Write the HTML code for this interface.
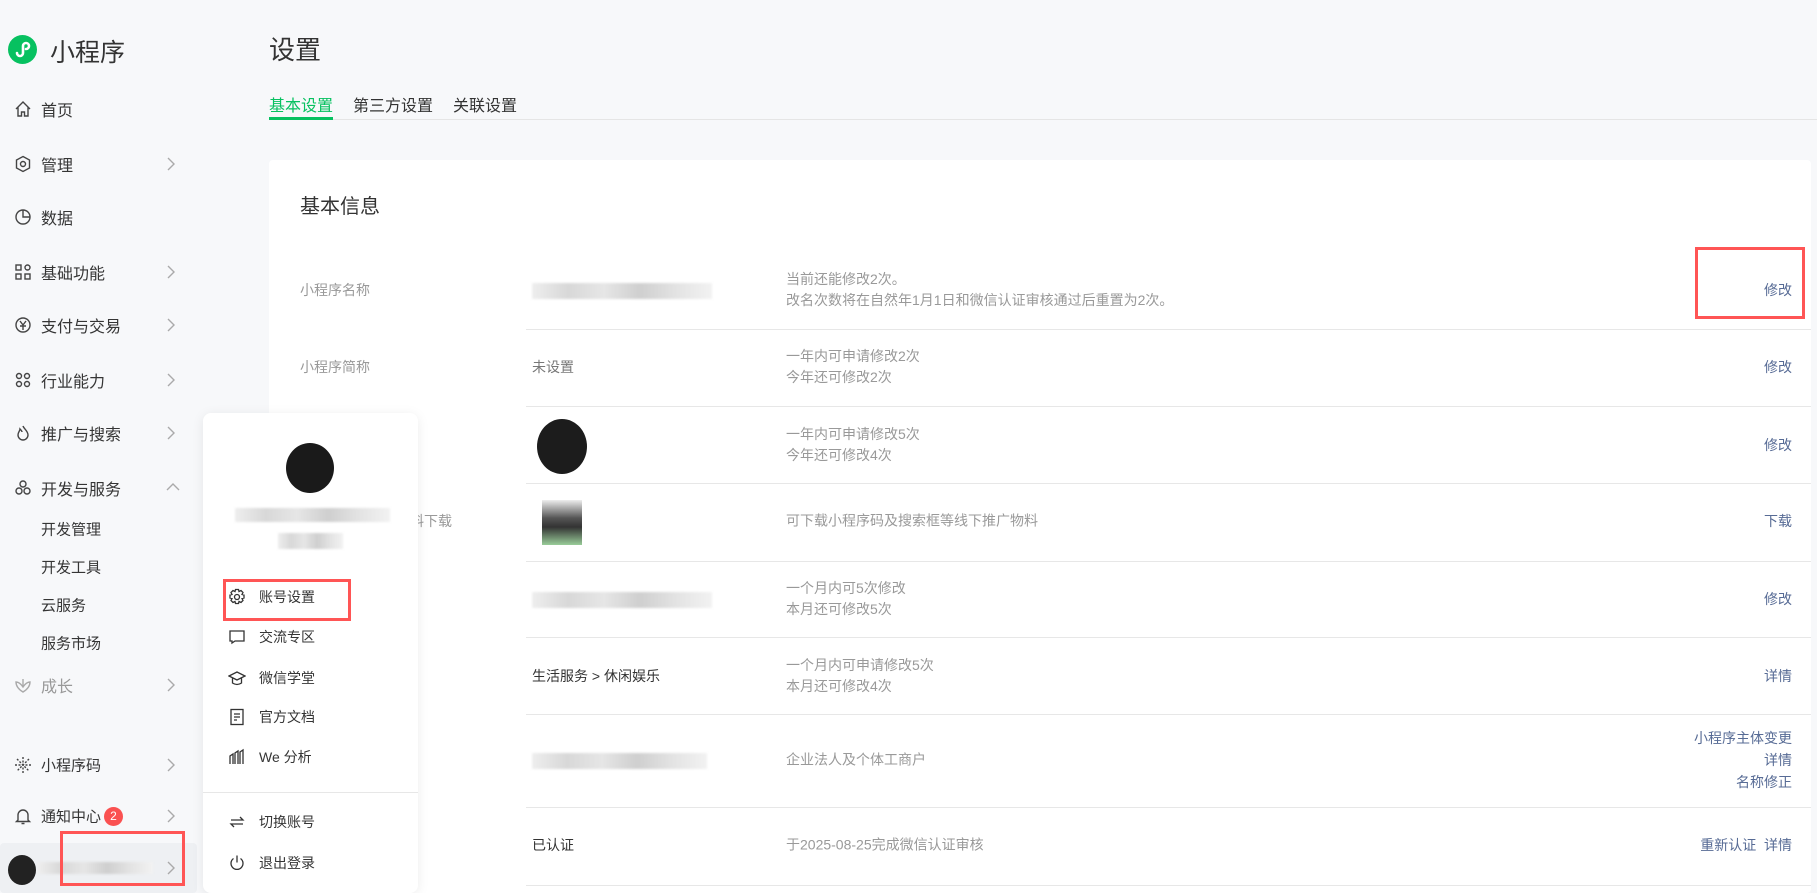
<!DOCTYPE html>
<html><head><meta charset="utf-8"><style>
*{margin:0;padding:0;box-sizing:border-box}
body{width:1817px;height:893px;overflow:hidden;background:#f7f8fa;font-family:"Liberation Sans","Noto Sans CJK SC",sans-serif;color:#333;position:relative}
.a{position:absolute;white-space:nowrap}
.nav{left:41px;font-size:16px;color:#353535;transform:translateY(-50%)}
.ico{left:14px;transform:translateY(-50%)}
.chev{left:166px;transform:translateY(-50%)}
.sub{left:41px;font-size:15px;color:#353535;transform:translateY(-50%)}
.lbl{left:300px;font-size:14px;color:#999;transform:translateY(-50%)}
.val{left:532px;font-size:14px;color:#333;transform:translateY(-50%)}
.desc{left:786px;font-size:14px;color:#999;line-height:21px;transform:translateY(-50%)}
.act{right:25px;font-size:14px;color:#576b95;text-align:right;line-height:22px;transform:translateY(-50%)}
.sep{left:526px;width:1285px;height:1px;background:#e7e7e7}
.blur{background:linear-gradient(90deg,#eee,#d8d8d8 20%,#e6e6e6 40%,#cfcfcf 60%,#e3e3e3 80%,#f2f2f2);filter:blur(1px)}
.mi{left:259px;font-size:14px;color:#353535;transform:translateY(-50%)}
.mic{left:228px;transform:translateY(-50%)}
</style></head><body>
<div class="a" style="left:8px;top:35px;width:29px;height:29px;border-radius:50%;background:#07c160"></div>
<svg class="a" style="left:8px;top:35px" width="29" height="29" viewBox="0 0 29 29"><path d="M9 18a3 3 0 1 0 6 0v-7a3 3 0 1 1 6 0 3 3 0 0 1-3 3M11 15" stroke="#fff" stroke-width="2.6" fill="none" stroke-linecap="round"/></svg>
<div class="a" style="left:50px;top:33px;font-size:25px;color:#333">小程序</div>
<div class="a" style="left:269px;top:30px;font-size:26px;color:#333">设置</div>
<div class="a" style="left:269px;top:92px;font-size:16px;color:#07c160">基本设置</div>
<div class="a" style="left:353px;top:92px;font-size:16px;color:#333">第三方设置</div>
<div class="a" style="left:453px;top:92px;font-size:16px;color:#333">关联设置</div>
<div class="a" style="left:269px;top:119px;width:1548px;height:1px;background:#e5e5e5"></div>
<div class="a" style="left:269px;top:117px;width:64px;height:3px;background:#07c160"></div>
<svg class="a ico" style="top:109px" width="18" height="18" viewBox="0 0 18 18" fill="none" stroke="#444" stroke-width="1.4"><path d="M2 9 9 2l7 7M4 7.5V16h3.5v-4h3v4H14V7.5"/></svg><div class="a nav" style="top:109px">首页</div>
<svg class="a ico" style="top:164px" width="18" height="18" viewBox="0 0 18 18" fill="none" stroke="#444" stroke-width="1.4"><path d="M9 1.5 15.5 5v8L9 16.5 2.5 13V5z"/><circle cx="9" cy="9" r="2.5"/></svg><div class="a nav" style="top:164px">管理</div>
<svg class="a ico" style="top:217px" width="18" height="18" viewBox="0 0 18 18" fill="none" stroke="#444" stroke-width="1.4"><circle cx="9" cy="9" r="7"/><path d="M9 2v7h7"/></svg><div class="a nav" style="top:217px">数据</div>
<svg class="a ico" style="top:272px" width="18" height="18" viewBox="0 0 18 18" fill="none" stroke="#444" stroke-width="1.4"><rect x="2" y="2" width="5" height="5"/><rect x="2" y="11" width="5" height="5"/><rect x="11" y="11" width="5" height="5"/><circle cx="13.5" cy="4.5" r="2.5"/></svg><div class="a nav" style="top:272px">基础功能</div>
<svg class="a ico" style="top:325px" width="18" height="18" viewBox="0 0 18 18" fill="none" stroke="#444" stroke-width="1.4"><circle cx="9" cy="9" r="7"/><path d="M6 5l3 4 3-4M6 10h6M9 9v5"/></svg><div class="a nav" style="top:325px">支付与交易</div>
<svg class="a ico" style="top:380px" width="18" height="18" viewBox="0 0 18 18" fill="none" stroke="#444" stroke-width="1.4"><circle cx="5" cy="5" r="2.5"/><circle cx="13" cy="5" r="2.5"/><circle cx="5" cy="13" r="2.5"/><circle cx="13" cy="13" r="2.5"/></svg><div class="a nav" style="top:380px">行业能力</div>
<svg class="a ico" style="top:433px" width="18" height="18" viewBox="0 0 18 18" fill="none" stroke="#444" stroke-width="1.4"><path d="M9 2c1 3 5 5 5 9a5 5 0 0 1-10 0c0-3 2-4 2-6 1 1 2 2 2 3"/></svg><div class="a nav" style="top:433px">推广与搜索</div>
<svg class="a ico" style="top:488px" width="18" height="18" viewBox="0 0 18 18" fill="none" stroke="#444" stroke-width="1.4"><circle cx="9" cy="5" r="3"/><circle cx="5" cy="12" r="3"/><circle cx="13" cy="12" r="3"/></svg><div class="a nav" style="top:488px">开发与服务</div>
<div class="a sub" style="top:529px">开发管理</div>
<div class="a sub" style="top:567px">开发工具</div>
<div class="a sub" style="top:605px">云服务</div>
<div class="a sub" style="top:643px">服务市场</div>
<svg class="a ico" style="top:685px" width="18" height="18" viewBox="0 0 18 18" fill="none" stroke="#aaa" stroke-width="1.4"><path d="M9 16C4 13 2 10 2 6c3 0 5 2 7 5 2-3 4-5 7-5 0 4-2 7-7 10zM9 11V3"/></svg><div class="a nav" style="top:685px;color:#999">成长</div>
<svg class="a ico" style="top:765px" width="18" height="18" viewBox="0 0 18 18" fill="none" stroke="#444" stroke-width="1.4" stroke-dasharray="2 1.5"><path d="M9 1v16M1 9h16M3 3l12 12M15 3 3 15"/></svg><div class="a nav" style="top:765px;font-size:15px">小程序码</div>
<svg class="a ico" style="top:816px" width="18" height="18" viewBox="0 0 18 18" fill="none" stroke="#444" stroke-width="1.4"><path d="M4 13V8a5 5 0 0 1 10 0v5l1.5 1.5h-13zM7.5 16.5h3"/></svg><div class="a nav" style="top:816px;font-size:15px">通知中心</div>
<div class="a" style="left:104px;top:807px;width:19px;height:19px;border-radius:50%;background:#fa5151;color:#fff;font-size:12px;text-align:center;line-height:19px">2</div>
<svg class="a chev" style="top:164px" width="10" height="16"><path d="M2 2l6 6-6 6" stroke="#aaa" stroke-width="1.4" fill="none"/></svg>
<svg class="a chev" style="top:272px" width="10" height="16"><path d="M2 2l6 6-6 6" stroke="#aaa" stroke-width="1.4" fill="none"/></svg>
<svg class="a chev" style="top:325px" width="10" height="16"><path d="M2 2l6 6-6 6" stroke="#aaa" stroke-width="1.4" fill="none"/></svg>
<svg class="a chev" style="top:380px" width="10" height="16"><path d="M2 2l6 6-6 6" stroke="#aaa" stroke-width="1.4" fill="none"/></svg>
<svg class="a chev" style="top:433px" width="10" height="16"><path d="M2 2l6 6-6 6" stroke="#aaa" stroke-width="1.4" fill="none"/></svg>
<svg class="a" style="left:165px;top:482px" width="16" height="10"><path d="M2 8l6-6 6 6" stroke="#aaa" stroke-width="1.4" fill="none"/></svg>
<svg class="a chev" style="top:685px" width="10" height="16"><path d="M2 2l6 6-6 6" stroke="#aaa" stroke-width="1.4" fill="none"/></svg>
<svg class="a chev" style="top:765px" width="10" height="16"><path d="M2 2l6 6-6 6" stroke="#aaa" stroke-width="1.4" fill="none"/></svg>
<svg class="a chev" style="top:816px" width="10" height="16"><path d="M2 2l6 6-6 6" stroke="#aaa" stroke-width="1.4" fill="none"/></svg>
<div class="a" style="left:0;top:843px;width:197px;height:50px;background:#eef0f3;border-radius:4px"></div>
<div class="a" style="left:8px;top:855px;width:28px;height:30px;border-radius:50%;background:#222"></div>
<div class="a blur" style="left:38px;top:862px;width:115px;height:12px"></div>
<svg class="a chev" style="top:868px" width="10" height="16"><path d="M2 2l6 6-6 6" stroke="#aaa" stroke-width="1.4" fill="none"/></svg>
<div class="a" style="left:60px;top:831px;width:125px;height:55px;border:3px solid #f55"></div>
<div class="a" style="left:269px;top:160px;width:1542px;height:733px;background:#fff;border-radius:4px"></div>
<div class="a" style="left:300px;top:190px;font-size:20px;color:#333">基本信息</div>
<div class="a sep" style="top:329px"></div><div class="a sep" style="top:406px"></div><div class="a sep" style="top:483px"></div><div class="a sep" style="top:561px"></div><div class="a sep" style="top:637px"></div><div class="a sep" style="top:714px"></div><div class="a sep" style="top:807px"></div><div class="a sep" style="top:885px"></div>
<div class="a lbl" style="top:290px">小程序名称</div>
<div class="a blur" style="left:532px;top:283px;width:180px;height:16px"></div>
<div class="a desc" style="top:290px">当前还能修改2次。<br>改名次数将在自然年1月1日和微信认证审核通过后重置为2次。</div>
<div class="a act" style="top:290px">修改</div>
<div class="a" style="left:1695px;top:247px;width:110px;height:72px;border:3px solid #f55"></div>
<div class="a lbl" style="top:367px">小程序简称</div>
<div class="a val" style="top:367px;color:#777;font-size:14px">未设置</div>
<div class="a desc" style="top:367px">一年内可申请修改2次<br>今年还可修改2次</div>
<div class="a act" style="top:367px">修改</div>
<div class="a" style="left:537px;top:419px;width:50px;height:55px;border-radius:50%;background:#1c1c1c"></div>
<div class="a desc" style="top:445px">一年内可申请修改5次<br>今年还可修改4次</div>
<div class="a act" style="top:445px">修改</div>
<div class="a lbl" style="top:521px;left:410px">料下载</div>
<div class="a" style="left:542px;top:500px;width:40px;height:45px;background:linear-gradient(#eee,#555 40%,#333 60%,#9c9)"></div>
<div class="a desc" style="top:521px">可下载小程序码及搜索框等线下推广物料</div>
<div class="a act" style="top:521px">下载</div>
<div class="a blur" style="left:532px;top:592px;width:180px;height:16px"></div>
<div class="a desc" style="top:599px">一个月内可5次修改<br>本月还可修改5次</div>
<div class="a act" style="top:599px">修改</div>
<div class="a val" style="top:676px">生活服务 &gt; 休闲娱乐</div>
<div class="a desc" style="top:676px">一个月内可申请修改5次<br>本月还可修改4次</div>
<div class="a act" style="top:676px">详情</div>
<div class="a blur" style="left:532px;top:753px;width:175px;height:16px"></div>
<div class="a desc" style="top:760px">企业法人及个体工商户</div>
<div class="a act" style="top:760px">小程序主体变更<br>详情<br>名称修正</div>
<div class="a val" style="top:845px">已认证</div>
<div class="a desc" style="top:845px">于2025-08-25完成微信认证审核</div>
<div class="a act" style="top:845px">重新认证&nbsp;&nbsp;详情</div>
<div class="a" style="left:203px;top:413px;width:215px;height:480px;background:#fff;border-radius:8px;box-shadow:0 2px 12px rgba(0,0,0,.08)"></div>
<div class="a" style="left:286px;top:443px;width:48px;height:50px;border-radius:50%;background:#1a1a1a"></div>
<div class="a blur" style="left:235px;top:508px;width:155px;height:14px"></div>
<div class="a blur" style="left:278px;top:533px;width:65px;height:16px"></div>
<svg class="a mic" style="top:597px" width="18" height="18" viewBox="0 0 18 18" fill="none" stroke="#333" stroke-width="1.3"><circle cx="9" cy="9" r="2.5"/><path d="M7.5 1.5h3l.5 2 2-1 2 2-1 2 2 .5v3l-2 .5 1 2-2 2-2-1-.5 2h-3l-.5-2-2 1-2-2 1-2-2-.5v-3l2-.5-1-2 2-2 2 1z"/></svg><div class="a mi" style="top:597px">账号设置</div>
<div class="a" style="left:223px;top:579px;width:128px;height:42px;border:3px solid #f55"></div>
<svg class="a mic" style="top:637px" width="18" height="18" viewBox="0 0 18 18" fill="none" stroke="#333" stroke-width="1.3"><path d="M2 3h14v10H7l-3 2v-2H2z"/></svg><div class="a mi" style="top:637px">交流专区</div>
<svg class="a mic" style="top:678px" width="18" height="18" viewBox="0 0 18 18" fill="none" stroke="#333" stroke-width="1.3"><path d="M1 7l8-4 8 4-8 4zM4.5 9v5c3 2 6 2 9 0V9"/></svg><div class="a mi" style="top:678px">微信学堂</div>
<svg class="a mic" style="top:717px" width="18" height="18" viewBox="0 0 18 18" fill="none" stroke="#333" stroke-width="1.3"><rect x="3" y="1.5" width="12" height="15"/><path d="M6 6h6M6 9h6M6 12h3"/></svg><div class="a mi" style="top:717px">官方文档</div>
<svg class="a mic" style="top:757px" width="18" height="18" viewBox="0 0 18 18" fill="none" stroke="#333" stroke-width="1.3"><path d="M2 16V8l3-2v10M7 16V5l3-2v13M12 16V4l3-2v14"/></svg><div class="a mi" style="top:757px">We 分析</div>
<div class="a" style="left:203px;top:792px;width:215px;height:1px;background:#e7e7e7"></div>
<svg class="a mic" style="top:822px" width="18" height="18" viewBox="0 0 18 18" fill="none" stroke="#333" stroke-width="1.3"><path d="M3 7h12L12 4M15 11H3l3 3"/></svg><div class="a mi" style="top:822px">切换账号</div>
<svg class="a mic" style="top:863px" width="18" height="18" viewBox="0 0 18 18" fill="none" stroke="#333" stroke-width="1.3"><path d="M5.5 4.5a6 6 0 1 0 7 0M9 1.5v7"/></svg><div class="a mi" style="top:863px">退出登录</div>
</body></html>
